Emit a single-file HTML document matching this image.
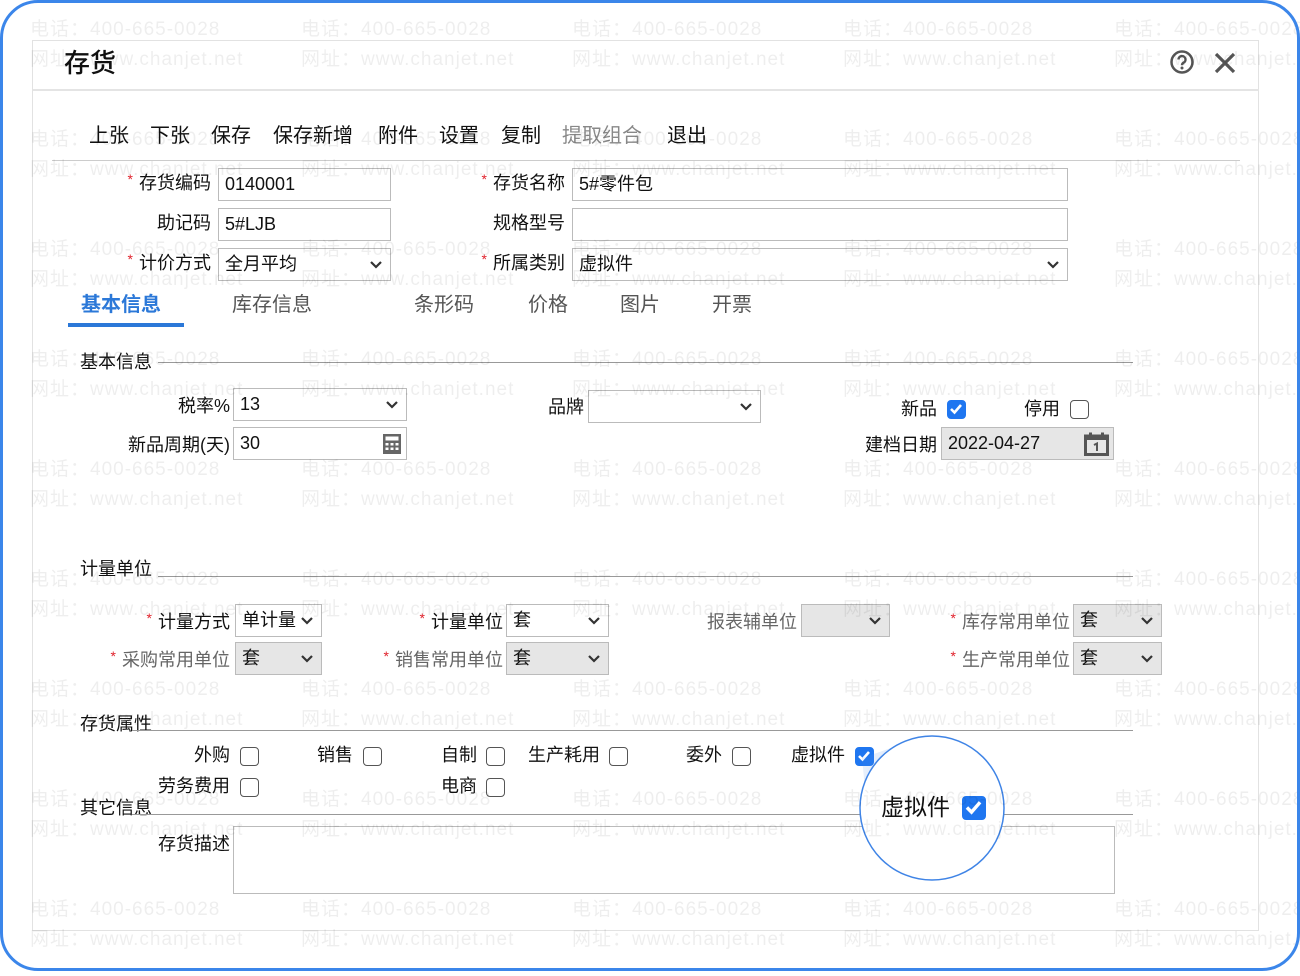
<!DOCTYPE html>
<html><head><meta charset="utf-8">
<style>
*{box-sizing:border-box;margin:0;padding:0}
body{width:1300px;height:971px;background:#fff;font-family:"Liberation Sans","Noto Sans CJK SC",sans-serif;color:#111;position:relative;overflow:hidden}
.frame{position:absolute;left:0;top:0;width:1300px;height:971px;border:3px solid #3b86ea;border-radius:38px}
.dlg{position:absolute;left:32px;top:40px;width:1227px;height:891px;border:1px solid #e2e2e2}
.a{position:absolute;white-space:nowrap}
.lbl{position:absolute;font-size:18px;text-align:right;white-space:nowrap;line-height:22px}
.lbl.g{color:#666}
.req{color:#e0202a;font-size:14px;position:relative;top:-5px;margin-right:6px}
.in{position:absolute;border:1px solid #bbb;background:#fff;font-size:18px;line-height:30px;padding-left:6px;height:33px}
.in.gr{background:#e6e6e6}
.chev{position:absolute;right:7px;top:11px;width:14px;height:10px}
.line{position:absolute;height:1px;background:#999}
.cb{position:absolute;width:19px;height:19px;border:1.5px solid #555;border-radius:4px;background:#fff}
.cb.on{background:#1f76f0;border-color:#1f76f0}
.tb{position:absolute;top:122px;font-size:20px;line-height:28px}
.tab{position:absolute;top:291px;font-size:20px;color:#555;line-height:28px}
.sec{position:absolute;font-size:18px;line-height:22px}
.wmw{position:absolute;left:0;top:-4px;width:1300px;height:980px;pointer-events:none}
.wm{position:absolute;font-size:19px;color:rgba(0,0,0,0.065);white-space:nowrap;pointer-events:none;letter-spacing:1px}
</style></head><body>
<div class="dlg"></div>
<div class="a" style="left:64px;top:46px;font-size:26px;line-height:34px;font-weight:500">存货</div>
<div class="a" style="left:33px;top:89px;width:1226px;height:2px;background:#e4e4e4"></div>
<svg class="a" style="left:1169px;top:49px" width="26" height="26" viewBox="0 0 26 26"><circle cx="13" cy="13" r="10.5" fill="none" stroke="#555" stroke-width="2.5"/><path d="M9.5 10.5a3.5 3.5 0 1 1 5 3.2c-1 .6-1.5 1.2-1.5 2.5" fill="none" stroke="#555" stroke-width="2.4"/><circle cx="13" cy="19" r="1.5" fill="#555"/></svg>
<svg class="a" style="left:1214px;top:52px" width="22" height="22" viewBox="0 0 22 22"><path d="M2 2L20 20M20 2L2 20" stroke="#555" stroke-width="3.2"/></svg>

<div class="tb" style="left:89px">上张</div>
<div class="tb" style="left:150px">下张</div>
<div class="tb" style="left:211px">保存</div>
<div class="tb" style="left:273px">保存新增</div>
<div class="tb" style="left:378px">附件</div>
<div class="tb" style="left:439px">设置</div>
<div class="tb" style="left:501px">复制</div>
<div class="tb" style="left:562px;color:#888">提取组合</div>
<div class="tb" style="left:667px">退出</div>
<div class="line" style="left:52px;top:160px;width:1188px;background:#ccc"></div>

<div class="lbl" style="right:1089px;top:172px"><span class="req">*</span>存货编码</div>
<div class="in" style="left:218px;top:168px;width:173px">0140001</div>
<div class="lbl" style="right:735px;top:172px"><span class="req">*</span>存货名称</div>
<div class="in" style="left:572px;top:168px;width:496px">5#零件包</div>
<div class="lbl" style="right:1089px;top:212px">助记码</div>
<div class="in" style="left:218px;top:208px;width:173px">5#LJB</div>
<div class="lbl" style="right:735px;top:212px">规格型号</div>
<div class="in" style="left:572px;top:208px;width:496px"></div>
<div class="lbl" style="right:1089px;top:252px"><span class="req">*</span>计价方式</div>
<div class="in" style="left:218px;top:248px;width:173px">全月平均<svg class="chev" viewBox="0 0 14 10"><path d="M2 2l5 5 5-5" fill="none" stroke="#333" stroke-width="2.2"/></svg></div>
<div class="lbl" style="right:735px;top:252px"><span class="req">*</span>所属类别</div>
<div class="in" style="left:572px;top:248px;width:496px">虚拟件<svg class="chev" viewBox="0 0 14 10"><path d="M2 2l5 5 5-5" fill="none" stroke="#333" stroke-width="2.2"/></svg></div>

<div class="tab" style="left:81px;color:#2b78d8;font-weight:bold">基本信息</div>
<div class="a" style="left:68px;top:323px;width:116px;height:4px;background:#2b78d8"></div>
<div class="tab" style="left:232px">库存信息</div>
<div class="tab" style="left:414px">条形码</div>
<div class="tab" style="left:528px">价格</div>
<div class="tab" style="left:620px">图片</div>
<div class="tab" style="left:712px">开票</div>

<div class="sec" style="left:80px;top:351px">基本信息</div>
<div class="line" style="left:158px;top:362px;width:975px"></div>

<div class="lbl" style="right:1070px;top:395px">税率%</div>
<div class="in" style="left:233px;top:388px;width:174px">13<svg class="chev" viewBox="0 0 14 10"><path d="M2 2l5 5 5-5" fill="none" stroke="#333" stroke-width="2.2"/></svg></div>
<div class="lbl" style="right:716px;top:396px">品牌</div>
<div class="in" style="left:588px;top:390px;width:173px"><svg class="chev" viewBox="0 0 14 10"><path d="M2 2l5 5 5-5" fill="none" stroke="#333" stroke-width="2.2"/></svg></div>
<div class="lbl" style="right:363px;top:398px">新品</div>
<div class="cb on" style="left:947px;top:400px"><svg width="16" height="16" viewBox="0 0 16 16" style="position:absolute;left:0;top:0"><path d="M3 8l3.5 3.5L13 4" fill="none" stroke="#fff" stroke-width="2.6"/></svg></div>
<div class="lbl" style="right:240px;top:398px">停用</div>
<div class="cb" style="left:1070px;top:400px"></div>

<div class="lbl" style="right:1070px;top:434px">新品周期(天)</div>
<div class="in" style="left:233px;top:427px;width:174px">30<svg class="a" style="right:4px;top:5px" width="20" height="22" viewBox="0 0 20 22"><rect x="1" y="1" width="18" height="20" fill="#666"/><rect x="3.5" y="3.5" width="13" height="4" fill="#fff"/><g fill="#fff"><rect x="3.5" y="10" width="3" height="2.5"/><rect x="8.5" y="10" width="3" height="2.5"/><rect x="13.5" y="10" width="3" height="2.5"/><rect x="3.5" y="14.5" width="3" height="2.5"/><rect x="8.5" y="14.5" width="3" height="2.5"/><rect x="13.5" y="14.5" width="3" height="2.5"/></g></svg></div>
<div class="lbl" style="right:363px;top:434px">建档日期</div>
<div class="in gr" style="left:941px;top:427px;width:173px">2022-04-27<svg class="a" style="right:4px;top:4px" width="25" height="24" viewBox="0 0 25 24"><rect x="1.5" y="4" width="22" height="18.5" fill="none" stroke="#555" stroke-width="3"/><rect x="1.5" y="4" width="22" height="4" fill="#555"/><rect x="5" y="0.5" width="3" height="5" fill="#555"/><rect x="17" y="0.5" width="3" height="5" fill="#555"/><path d="M10 13l3-1.5V19" fill="none" stroke="#555" stroke-width="2"/></svg></div>

<div class="sec" style="left:80px;top:558px">计量单位</div>
<div class="line" style="left:158px;top:576px;width:975px"></div>

<div class="lbl" style="right:1070px;top:611px"><span class="req">*</span>计量方式</div>
<div class="in" style="left:235px;top:604px;width:87px">单计量<svg class="chev" viewBox="0 0 14 10"><path d="M2 2l5 5 5-5" fill="none" stroke="#333" stroke-width="2.2"/></svg></div>
<div class="lbl" style="right:797px;top:611px"><span class="req">*</span>计量单位</div>
<div class="in" style="left:506px;top:604px;width:103px">套<svg class="chev" viewBox="0 0 14 10"><path d="M2 2l5 5 5-5" fill="none" stroke="#333" stroke-width="2.2"/></svg></div>
<div class="lbl g" style="right:503px;top:611px">报表辅单位</div>
<div class="in gr" style="left:801px;top:604px;width:89px"><svg class="chev" viewBox="0 0 14 10"><path d="M2 2l5 5 5-5" fill="none" stroke="#333" stroke-width="2.2"/></svg></div>
<div class="lbl g" style="right:230px;top:611px"><span class="req">*</span>库存常用单位</div>
<div class="in gr" style="left:1073px;top:604px;width:89px">套<svg class="chev" viewBox="0 0 14 10"><path d="M2 2l5 5 5-5" fill="none" stroke="#333" stroke-width="2.2"/></svg></div>

<div class="lbl g" style="right:1070px;top:649px"><span class="req">*</span>采购常用单位</div>
<div class="in gr" style="left:235px;top:642px;width:87px">套<svg class="chev" viewBox="0 0 14 10"><path d="M2 2l5 5 5-5" fill="none" stroke="#333" stroke-width="2.2"/></svg></div>
<div class="lbl g" style="right:797px;top:649px"><span class="req">*</span>销售常用单位</div>
<div class="in gr" style="left:506px;top:642px;width:103px">套<svg class="chev" viewBox="0 0 14 10"><path d="M2 2l5 5 5-5" fill="none" stroke="#333" stroke-width="2.2"/></svg></div>
<div class="lbl g" style="right:230px;top:649px"><span class="req">*</span>生产常用单位</div>
<div class="in gr" style="left:1073px;top:642px;width:89px">套<svg class="chev" viewBox="0 0 14 10"><path d="M2 2l5 5 5-5" fill="none" stroke="#333" stroke-width="2.2"/></svg></div>

<div class="sec" style="left:80px;top:713px">存货属性</div>
<div class="line" style="left:132px;top:730px;width:1001px"></div>

<div class="lbl" style="right:1070px;top:744px">外购</div><div class="cb" style="left:240px;top:747px"></div>
<div class="lbl" style="right:947px;top:744px">销售</div><div class="cb" style="left:363px;top:747px"></div>
<div class="lbl" style="right:823px;top:744px">自制</div><div class="cb" style="left:486px;top:747px"></div>
<div class="lbl" style="right:700px;top:744px">生产耗用</div><div class="cb" style="left:609px;top:747px"></div>
<div class="lbl" style="right:578px;top:744px">委外</div><div class="cb" style="left:732px;top:747px"></div>
<div class="lbl" style="right:455px;top:744px">虚拟件</div>
<div class="cb on" style="left:855px;top:747px"><svg width="16" height="16" viewBox="0 0 16 16" style="position:absolute;left:0;top:0"><path d="M3 8l3.5 3.5L13 4" fill="none" stroke="#fff" stroke-width="2.6"/></svg></div>
<div class="lbl" style="right:1070px;top:775px">劳务费用</div><div class="cb" style="left:240px;top:778px"></div>
<div class="lbl" style="right:823px;top:775px">电商</div><div class="cb" style="left:486px;top:778px"></div>

<div class="sec" style="left:80px;top:797px">其它信息</div>
<div class="line" style="left:132px;top:814px;width:1001px"></div>
<div class="lbl" style="right:1070px;top:833px">存货描述</div>
<div class="in" style="left:233px;top:826px;width:882px;height:68px"></div>

<svg class="a" style="left:840px;top:730px" width="180" height="160" viewBox="0 0 180 160">
<defs><linearGradient id="g" x1="0" y1="0" x2="1" y2="1"><stop offset="0" stop-color="#4f8ee8" stop-opacity=".08"/><stop offset="1" stop-color="#4f8ee8" stop-opacity=".4"/></linearGradient></defs>
<path d="M22 28L80 8L30 110Z" fill="url(#g)"/>
<circle cx="92" cy="78" r="72" fill="#fff" stroke="#3f84e6" stroke-width="1.5"/>
</svg>
<div class="a" style="left:881px;top:793px;font-size:23px;line-height:28px">虚拟件</div>
<div class="cb on" style="left:962px;top:796px;width:24px;height:24px;border-radius:4px"><svg width="21" height="21" viewBox="0 0 16 16" style="position:absolute;left:0;top:0"><path d="M3 8l3.5 3.5L13 4" fill="none" stroke="#fff" stroke-width="2.6"/></svg></div>

<div class="wmw">
<div class="wm" style="left:30px;top:18px">电话：400-665-0028</div><div class="wm" style="left:30px;top:48px">网址：www.chanjet.net</div>
<div class="wm" style="left:301px;top:18px">电话：400-665-0028</div><div class="wm" style="left:301px;top:48px">网址：www.chanjet.net</div>
<div class="wm" style="left:572px;top:18px">电话：400-665-0028</div><div class="wm" style="left:572px;top:48px">网址：www.chanjet.net</div>
<div class="wm" style="left:843px;top:18px">电话：400-665-0028</div><div class="wm" style="left:843px;top:48px">网址：www.chanjet.net</div>
<div class="wm" style="left:1114px;top:18px">电话：400-665-0028</div><div class="wm" style="left:1114px;top:48px">网址：www.chanjet.net</div>
<div class="wm" style="left:30px;top:128px">电话：400-665-0028</div><div class="wm" style="left:30px;top:158px">网址：www.chanjet.net</div>
<div class="wm" style="left:301px;top:128px">电话：400-665-0028</div><div class="wm" style="left:301px;top:158px">网址：www.chanjet.net</div>
<div class="wm" style="left:572px;top:128px">电话：400-665-0028</div><div class="wm" style="left:572px;top:158px">网址：www.chanjet.net</div>
<div class="wm" style="left:843px;top:128px">电话：400-665-0028</div><div class="wm" style="left:843px;top:158px">网址：www.chanjet.net</div>
<div class="wm" style="left:1114px;top:128px">电话：400-665-0028</div><div class="wm" style="left:1114px;top:158px">网址：www.chanjet.net</div>
<div class="wm" style="left:30px;top:238px">电话：400-665-0028</div><div class="wm" style="left:30px;top:268px">网址：www.chanjet.net</div>
<div class="wm" style="left:301px;top:238px">电话：400-665-0028</div><div class="wm" style="left:301px;top:268px">网址：www.chanjet.net</div>
<div class="wm" style="left:572px;top:238px">电话：400-665-0028</div><div class="wm" style="left:572px;top:268px">网址：www.chanjet.net</div>
<div class="wm" style="left:843px;top:238px">电话：400-665-0028</div><div class="wm" style="left:843px;top:268px">网址：www.chanjet.net</div>
<div class="wm" style="left:1114px;top:238px">电话：400-665-0028</div><div class="wm" style="left:1114px;top:268px">网址：www.chanjet.net</div>
<div class="wm" style="left:30px;top:348px">电话：400-665-0028</div><div class="wm" style="left:30px;top:378px">网址：www.chanjet.net</div>
<div class="wm" style="left:301px;top:348px">电话：400-665-0028</div><div class="wm" style="left:301px;top:378px">网址：www.chanjet.net</div>
<div class="wm" style="left:572px;top:348px">电话：400-665-0028</div><div class="wm" style="left:572px;top:378px">网址：www.chanjet.net</div>
<div class="wm" style="left:843px;top:348px">电话：400-665-0028</div><div class="wm" style="left:843px;top:378px">网址：www.chanjet.net</div>
<div class="wm" style="left:1114px;top:348px">电话：400-665-0028</div><div class="wm" style="left:1114px;top:378px">网址：www.chanjet.net</div>
<div class="wm" style="left:30px;top:458px">电话：400-665-0028</div><div class="wm" style="left:30px;top:488px">网址：www.chanjet.net</div>
<div class="wm" style="left:301px;top:458px">电话：400-665-0028</div><div class="wm" style="left:301px;top:488px">网址：www.chanjet.net</div>
<div class="wm" style="left:572px;top:458px">电话：400-665-0028</div><div class="wm" style="left:572px;top:488px">网址：www.chanjet.net</div>
<div class="wm" style="left:843px;top:458px">电话：400-665-0028</div><div class="wm" style="left:843px;top:488px">网址：www.chanjet.net</div>
<div class="wm" style="left:1114px;top:458px">电话：400-665-0028</div><div class="wm" style="left:1114px;top:488px">网址：www.chanjet.net</div>
<div class="wm" style="left:30px;top:568px">电话：400-665-0028</div><div class="wm" style="left:30px;top:598px">网址：www.chanjet.net</div>
<div class="wm" style="left:301px;top:568px">电话：400-665-0028</div><div class="wm" style="left:301px;top:598px">网址：www.chanjet.net</div>
<div class="wm" style="left:572px;top:568px">电话：400-665-0028</div><div class="wm" style="left:572px;top:598px">网址：www.chanjet.net</div>
<div class="wm" style="left:843px;top:568px">电话：400-665-0028</div><div class="wm" style="left:843px;top:598px">网址：www.chanjet.net</div>
<div class="wm" style="left:1114px;top:568px">电话：400-665-0028</div><div class="wm" style="left:1114px;top:598px">网址：www.chanjet.net</div>
<div class="wm" style="left:30px;top:678px">电话：400-665-0028</div><div class="wm" style="left:30px;top:708px">网址：www.chanjet.net</div>
<div class="wm" style="left:301px;top:678px">电话：400-665-0028</div><div class="wm" style="left:301px;top:708px">网址：www.chanjet.net</div>
<div class="wm" style="left:572px;top:678px">电话：400-665-0028</div><div class="wm" style="left:572px;top:708px">网址：www.chanjet.net</div>
<div class="wm" style="left:843px;top:678px">电话：400-665-0028</div><div class="wm" style="left:843px;top:708px">网址：www.chanjet.net</div>
<div class="wm" style="left:1114px;top:678px">电话：400-665-0028</div><div class="wm" style="left:1114px;top:708px">网址：www.chanjet.net</div>
<div class="wm" style="left:30px;top:788px">电话：400-665-0028</div><div class="wm" style="left:30px;top:818px">网址：www.chanjet.net</div>
<div class="wm" style="left:301px;top:788px">电话：400-665-0028</div><div class="wm" style="left:301px;top:818px">网址：www.chanjet.net</div>
<div class="wm" style="left:572px;top:788px">电话：400-665-0028</div><div class="wm" style="left:572px;top:818px">网址：www.chanjet.net</div>
<div class="wm" style="left:843px;top:788px">电话：400-665-0028</div><div class="wm" style="left:843px;top:818px">网址：www.chanjet.net</div>
<div class="wm" style="left:1114px;top:788px">电话：400-665-0028</div><div class="wm" style="left:1114px;top:818px">网址：www.chanjet.net</div>
<div class="wm" style="left:30px;top:898px">电话：400-665-0028</div><div class="wm" style="left:30px;top:928px">网址：www.chanjet.net</div>
<div class="wm" style="left:301px;top:898px">电话：400-665-0028</div><div class="wm" style="left:301px;top:928px">网址：www.chanjet.net</div>
<div class="wm" style="left:572px;top:898px">电话：400-665-0028</div><div class="wm" style="left:572px;top:928px">网址：www.chanjet.net</div>
<div class="wm" style="left:843px;top:898px">电话：400-665-0028</div><div class="wm" style="left:843px;top:928px">网址：www.chanjet.net</div>
<div class="wm" style="left:1114px;top:898px">电话：400-665-0028</div><div class="wm" style="left:1114px;top:928px">网址：www.chanjet.net</div>
</div>

<div class="frame"></div>
</body></html>
